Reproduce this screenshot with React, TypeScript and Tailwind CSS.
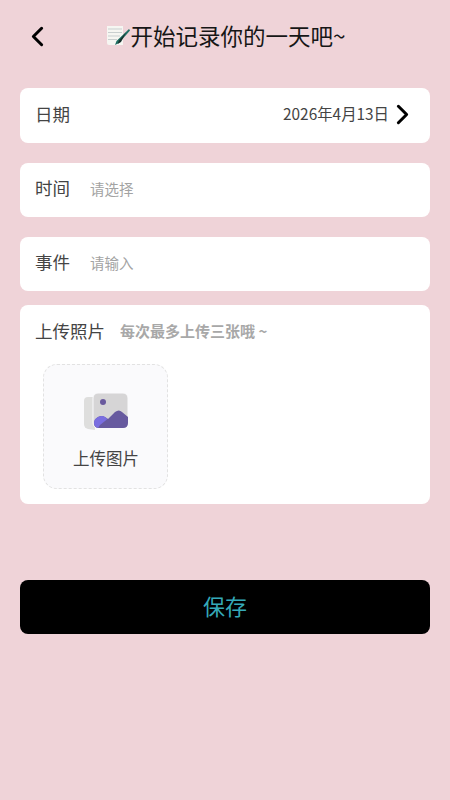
import { ChevronLeft, ChevronRight } from "lucide-react";

const font = { fontFamily: '"Noto Sans CJK SC", Roboto, sans-serif' };

function MemoIcon() {
    return (
        <svg width="26" height="24" viewBox="0 0 26 24" className="shrink-0">
            <path d="M2 3 H18 V22 H4 Q2 22 2 20 Z" fill="#f6f6f2" />
            <path d="M3 6 H17 M3 9.5 H17 M3 13 H15 M3 16.5 H12" stroke="#c9cfcf" strokeWidth="1" />
            <path d="M24 6 L25 7.5 L14 20 L10 22 L11.5 18 Z" fill="#1f6f63" />
            <path d="M21 9.5 L14 17.5 L12.5 21 L16 19 Z" fill="#17302c" />
        </svg>
    );
}

function PhotoIcon() {
    return (
        <svg width="46" height="40" viewBox="0 0 46 40">
            <path d="M10 6 L5 6 Q1 6 1 10 L1 33 Q1 37 5 38 L12 39 Z" fill="#dededd" />
            <rect x="10" y="2" width="35" height="35" rx="5" fill="#d6d5d6" stroke="#fafafc" strokeWidth="1" />
            <circle cx="20" cy="11" r="3" fill="#6a5a9e" />
            <path d="M11 32 Q11 28 15 26 Q19 24 22 26 L25 28 L32 21 Q36 18 39 21 L45 26 V32 Q45 37 40 37 H16 Q11 37 11 32 Z" fill="#675a9f" />
            <path d="M11 32 Q11 28 15 26 Q19 24 22 26 L24.5 28 L17 34 L15 37 Q11 36 11 32 Z" fill="#7a6ee0" />
        </svg>
    );
}

function FieldRow(props: { label: string; placeholder: string }) {
    return (
        <div className="h-[54px] rounded-[8px] bg-white pl-[15px] pb-[3px] flex items-center">
            <span className="text-[17.5px] text-[#444444] w-[55px]">{props.label}</span>
            <span className="text-[14.5px] text-[#a3a3a3]">{props.placeholder}</span>
        </div>
    );
}

export default function App() {
    return (
        <div className="w-[450px] h-[800px] bg-[#efd3d8] flex flex-col overflow-hidden" style={font}>
            {/* Header */}
            <div className="relative h-[74px] pb-[4px] flex items-center justify-center shrink-0">
                <ChevronLeft className="absolute left-[21px] top-[20px] text-black" size={33} strokeWidth={2.2} />
                <div className="flex items-center">
                    <MemoIcon />
                    <span className="text-[22.5px] leading-[30px] text-[#161616]">开始记录你的一天吧~</span>
                </div>
            </div>

            <div className="px-5 pt-[14px] flex flex-col">
                {/* Date */}
                <div className="h-[55px] rounded-[8px] bg-white pl-[15px] pr-[11px] pb-[3px] flex items-center justify-between">
                    <span className="text-[17.5px] text-[#444444]">日期</span>
                    <div className="flex items-center">
                        <span className="text-[15.4px] text-[#444444] mr-[-3px]">2026年4月13日</span>
                        <ChevronRight className="text-black" size={33} strokeWidth={2.2} />
                    </div>
                </div>

                <div className="mt-5 flex flex-col gap-5">
                    <FieldRow label="时间" placeholder="请选择" />
                    <FieldRow label="事件" placeholder="请输入" />
                </div>

                {/* Upload */}
                <div className="mt-[14px] h-[199px] rounded-[8px] bg-white px-[15px] pt-3">
                    <div className="flex items-center h-[28px]">
                        <span className="text-[17.5px] text-[#444444]">上传照片</span>
                        <span className="ml-[15px] text-[15px] font-bold text-[#a8a8a8]">每次最多上传三张哦 ~</span>
                    </div>
                    <div className="mt-[19px] ml-[8px] w-[125px] h-[125px] rounded-[14px] border-[1.5px] border-dashed border-[#e2e2e2] bg-[#fafafc] flex flex-col items-center pt-[26px]">
                        <PhotoIcon />
                        <span className="mt-[15px] ml-[1px] text-[16.5px] leading-[24px] text-[#444444]">上传图片</span>
                    </div>
                </div>

                <button className="mt-[76px] h-[54px] rounded-[8px] pb-[3px] bg-black text-[22px] text-[#35a9b8]">保存</button>
            </div>
        </div>
    );
}
